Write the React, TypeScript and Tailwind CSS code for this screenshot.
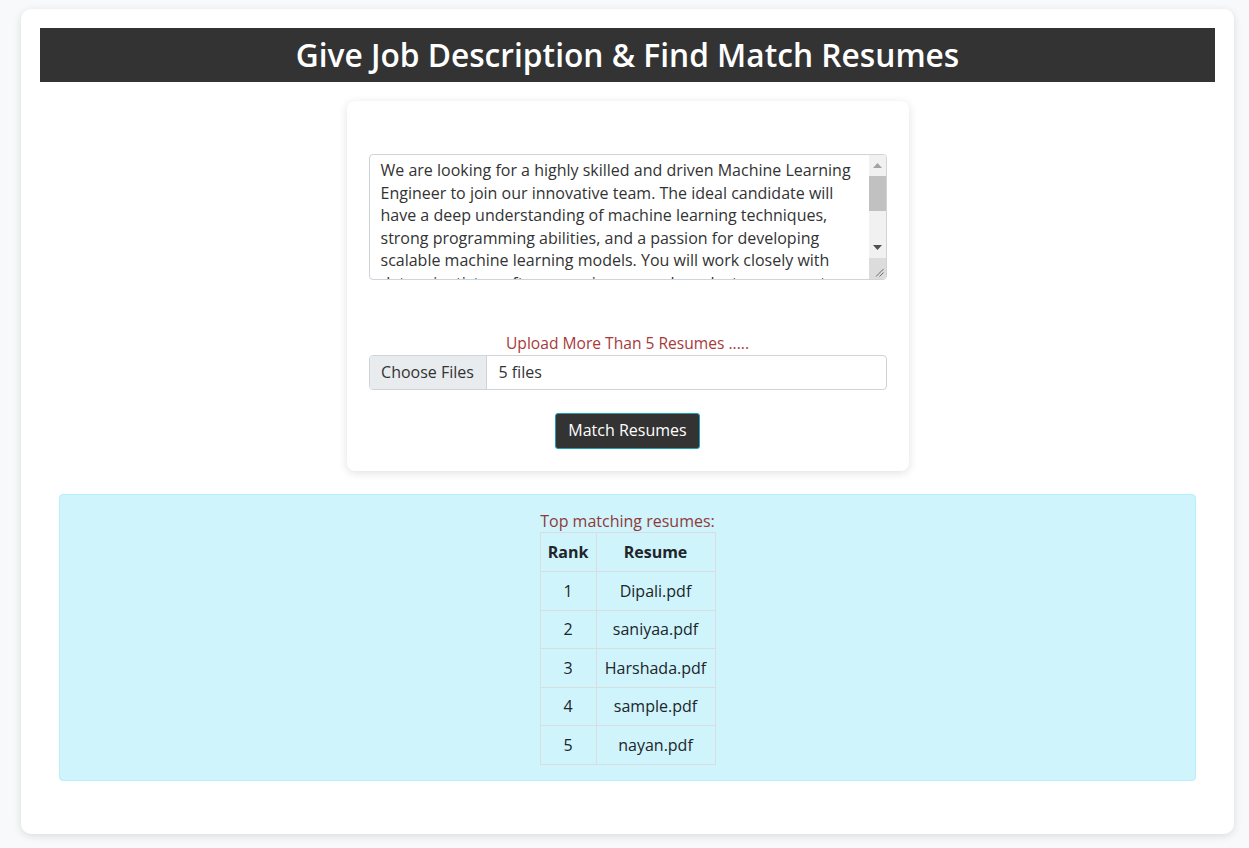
import React from "react";

const jd =
  "We are looking for a highly skilled and driven Machine Learning\nEngineer to join our innovative team. The ideal candidate will\nhave a deep understanding of machine learning techniques,\nstrong programming abilities, and a passion for developing\nscalable machine learning models. You will work closely with\ndata scientists, software engineers, and product managers to\ndesign, build, and deploy intelligent systems that solve\nreal-world problems.";

const rows = [
  ["1", "Dipali.pdf"],
  ["2", "saniyaa.pdf"],
  ["3", "Harshada.pdf"],
  ["4", "sample.pdf"],
  ["5", "nayan.pdf"],
];

function FakeScrollbar() {
  return (
    <div className="flex w-[17px] shrink-0 flex-col bg-[#f1f1f1]">
      <div className="flex h-[21px] items-center justify-center pb-[1px]">
        <svg width="9" height="5" viewBox="0 0 9 5">
          <polygon points="0,5 9,5 4.5,0" fill="#a3a3a3" />
        </svg>
      </div>
      <div className="h-[35px] bg-[#c1c1c1]" />
      <div className="flex-1" />
      <div className="flex h-[19px] items-center justify-center pb-[3px]">
        <svg width="9" height="5" viewBox="0 0 9 5">
          <polygon points="0,0 9,0 4.5,5" fill="#505050" />
        </svg>
      </div>
      <div className="flex h-[21px] items-end justify-end bg-[#dcdcdc] pb-[2px] pr-[2px]">
        <svg width="9" height="9" viewBox="0 0 9 9">
          <line x1="1" y1="8.5" x2="8.5" y2="1" stroke="#6b6b6b" strokeWidth="1" />
          <line x1="4.5" y1="8.5" x2="8.5" y2="4.5" stroke="#6b6b6b" strokeWidth="1" />
        </svg>
      </div>
    </div>
  );
}

export default function App() {
  return (
    <div
      className="min-h-[848px] bg-[#f8f9fa] pt-[9px] text-[16px] leading-[22.5px] text-[#212529]"
      style={{ fontFamily: '"Open Sans", "Noto Sans", sans-serif' }}
    >
      <div className="ml-[21px] w-[1213px] h-[825px] rounded-[10px] bg-white px-[19px] pt-[19px] shadow-[0_2px_8px_rgba(0,0,0,0.12)]">
        <div className="flex h-[54px] items-center justify-center bg-[#333333]">
          <h1 className="text-[31.7px] font-semibold text-white">
            Give Job Description &amp; Find Match Resumes
          </h1>
        </div>

        <div className="mt-[19px] flex justify-center">
          <div className="w-[562px] rounded-[8px] bg-white px-[22px] pt-[53px] pb-[22px] shadow-[0_2px_10px_rgba(0,0,0,0.12)]">
            <div className="flex h-[126px] w-full overflow-hidden rounded-[4px] border border-[#ced4da]">
              <textarea
                defaultValue={jd}
                wrap="off"
                className="block h-full min-w-0 flex-1 resize-none overflow-hidden border-0 px-[11px] py-[4px] text-[16px] leading-[22.5px] text-[#333333] outline-none"
                style={{ fontFamily: '"Open Sans", "Noto Sans", sans-serif' }}
              />
              <FakeScrollbar />
            </div>
            <div className="mt-[52px] text-center text-[15.6px] text-[#a83a3a]">
              Upload More Than 5 Resumes .....
            </div>
            <div className="flex h-[35px] w-full overflow-hidden rounded-[4px] border border-[#ced4da]">
              <div className="flex w-[117px] items-center justify-center border-r border-[#ced4da] bg-[#e9ecef] text-[#333333]">
                Choose Files
              </div>
              <div className="flex items-center pl-[12px] text-[#333333]">5 files</div>
            </div>
            <div className="mt-[23px] flex justify-center">
              <button className="h-[36px] rounded-[3px] border border-[#17a2b8] bg-[#333333] px-[12px] text-[16px] text-white">
                Match Resumes
              </button>
            </div>
          </div>
        </div>

        <div className="mx-[19px] mt-[23px] rounded-[4px] border border-[#b6effb] bg-[#cff4fc] px-[16px] pt-[15px] pb-[15px]">
          <div className="text-center text-[#8f3a3a]">Top matching resumes:</div>
          <div className="flex justify-center">
            <table className="w-[175px] table-fixed border-collapse text-center">
              <thead>
                <tr>
                  <th className="h-[39px] w-[56px] border border-[#d7dde0] px-[4px] font-bold">
                    Rank
                  </th>
                  <th className="h-[39px] w-[119px] border border-[#d7dde0] px-[4px] font-bold">
                    Resume
                  </th>
                </tr>
              </thead>
              <tbody>
                {rows.map(([r, n]) => (
                  <tr key={r}>
                    <td className="h-[38.5px] border border-[#d7dde0] px-[4px]">{r}</td>
                    <td className="h-[38.5px] border border-[#d7dde0] px-[4px]">{n}</td>
                  </tr>
                ))}
              </tbody>
            </table>
          </div>
        </div>
      </div>
    </div>
  );
}
